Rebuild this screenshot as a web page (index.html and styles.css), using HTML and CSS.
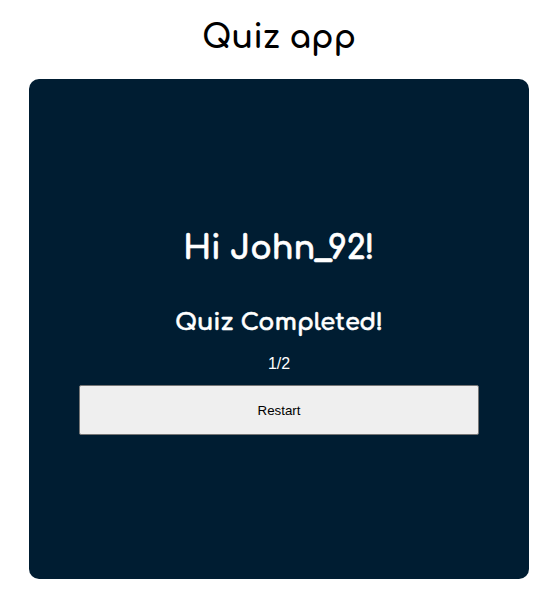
FILE: index.html
```html
<!DOCTYPE html>
<html>
<head>
<meta charset="utf-8">
<title>Quiz app</title>
<link rel="stylesheet" href="styles.css">
</head>
<body>
<div class="page">
  <h1 class="title">Quiz app</h1>
  <div class="card">
    <h2 class="greeting">Hi John_92!</h2>
    <h3 class="status">Quiz Completed!</h3>
    <p class="score">1/2</p>
    <button class="restart">Restart</button>
  </div>
</div>
</body>
</html>
```
FILE: styles.css
```css
html, body {
  margin: 0;
  padding: 0;
  background: #ffffff;
}
.page {
  width: 500px;
  margin-left: 29px;
  display: flex;
  flex-direction: column;
  align-items: center;
}
.title {
  font-family: "Comfortaa", "Quicksand", "Lato", sans-serif;
  font-weight: 700;
  font-size: 32px;
  line-height: 40px;
  margin: 18px 0 21px;
  color: #000;
}
.card {
  box-sizing: border-box;
  width: 500px;
  height: 500px;
  background: #001d32;
  border-radius: 10px;
  display: flex;
  flex-direction: column;
  align-items: center;
  padding-top: 150px;
  color: #fff;
}
.greeting {
  font-family: "Comfortaa", "Quicksand", "Lato", sans-serif;
  font-weight: 700;
  font-size: 32px;
  line-height: 40px;
  margin: 0;
  -webkit-text-stroke: 0.6px #fff;
}
.status {
  font-family: "Comfortaa", "Quicksand", "Lato", sans-serif;
  font-weight: 700;
  font-size: 24px;
  line-height: 30px;
  margin: 39px 0 0;
  -webkit-text-stroke: 0.5px #fff;
}
.score {
  font-family: "Liberation Sans", Arial, sans-serif;
  font-size: 16px;
  line-height: 20px;
  margin: 16px 0 0;
}
.restart {
  box-sizing: border-box;
  width: 400px;
  height: 50px;
  margin-top: 11px;
  background: #efefef;
  border: 1px solid #767676;
  border-radius: 2px;
  font-family: "Liberation Sans", Arial, sans-serif;
  font-size: 13.333px;
  color: #000;
}
```
